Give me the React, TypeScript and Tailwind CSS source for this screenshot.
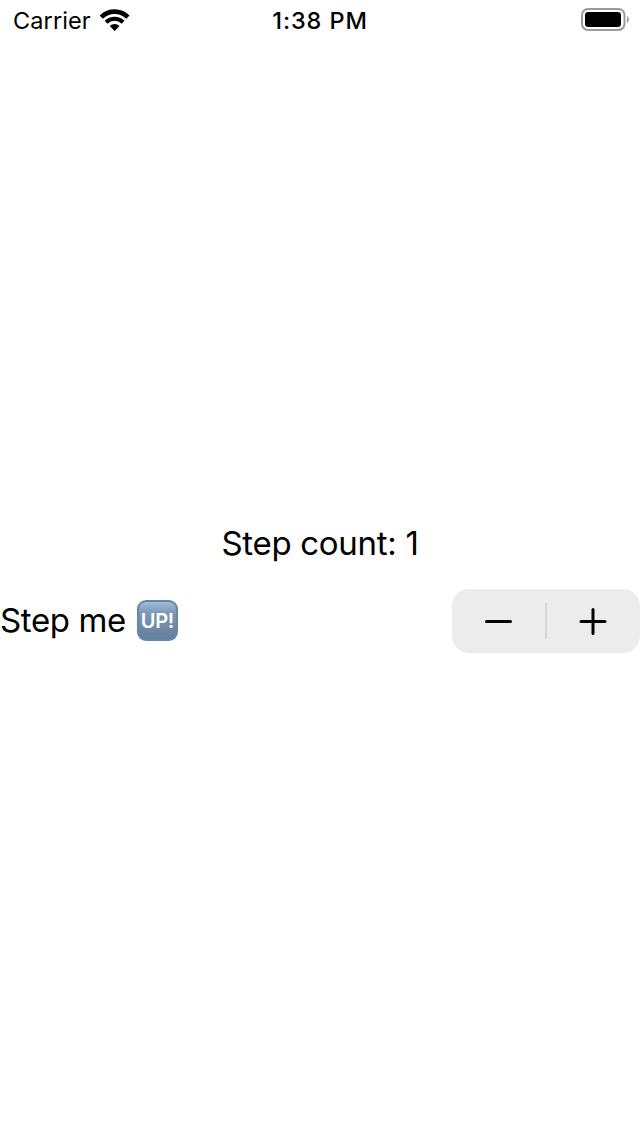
import { useState } from "react";

function WifiIcon() {
  return (
    <svg width="30" height="22" viewBox="0 0 30 22" fill="none" aria-hidden="true">
      <path d="M1.3 8.2A18.8 18.8 0 0 1 27.9 8.2" stroke="#000" strokeWidth="4.7" />
      <path d="M6.1 13.2A12.2 12.2 0 0 1 23.1 13.2" stroke="#000" strokeWidth="4.1" />
      <path d="M14.6 22L9.7 17A7 7 0 0 1 19.5 17Z" fill="#000" />
    </svg>
  );
}

function BatteryIcon() {
  return (
    <svg width="49" height="24" viewBox="0 0 49 24" fill="none" aria-hidden="true">
      <rect x="2" y="1" width="42.5" height="21" rx="6" stroke="#9b9b9b" strokeWidth="2" />
      <rect x="5" y="4" width="36" height="15" rx="3.2" fill="#000" />
      <path d="M47 8C49.4 9 49.4 14 47 15Z" fill="#9b9b9b" />
    </svg>
  );
}

function UpBadge() {
  return (
    <span className="mb-px ml-[11px] flex h-[41px] w-[41px] items-center justify-center rounded-[9px] border-2 border-[#6887a6] border-t-[#6487a8] bg-linear-to-b from-[#9dbad6] via-[#7c98b5] via-30% to-[#637f9c]">
      <span className="text-[20px] leading-none font-semibold tracking-[-0.3px] text-white">UP!</span>
    </span>
  );
}

export default function App() {
  const [count, setCount] = useState(1);

  return (
    <div className="flex h-[1136px] w-[640px] flex-col bg-white font-['Inter',sans-serif] text-black">
      <header className="grid h-10 grid-cols-3 items-center">
        <div className="flex items-center gap-[9px] pl-[13px]">
          <span className="pt-0.5 text-[23.5px] leading-[38px] tracking-[0.1px]">Carrier</span>
          <WifiIcon />
        </div>
        <div className="pt-0.5 text-center text-[23.5px] leading-[38px] font-medium tracking-[0.9px]">1:38 PM</div>
        <div className="flex justify-end pr-[11px]">
          <BatteryIcon />
        </div>
      </header>
      <main className="flex flex-col pt-[483px]">
        <p className="text-center text-[33px] leading-10 tracking-[-0.3px]">Step count: {count}</p>
        <div className="mt-[26px] flex h-16 items-center justify-between">
          <div className="flex items-center">
            <span className="mb-0.5 text-[33px] leading-10 tracking-[-0.38px]">Step me</span>
            <UpBadge />
          </div>
          <div className="flex h-16 w-[188px] items-center rounded-[17px] bg-[#ececec]">
            <button
              type="button"
              aria-label="Decrement"
              className="flex h-full flex-1 items-center justify-center"
              onClick={() => setCount(count - 1)}
            >
              <svg width="28" height="28" viewBox="0 0 28 28" aria-hidden="true">
                <path d="M1.5 14.5H25.5" stroke="#000" strokeWidth="3" strokeLinecap="round" />
              </svg>
            </button>
            <span className="h-9 w-[2px] bg-[#d6d6d6]" />
            <button
              type="button"
              aria-label="Increment"
              className="flex h-full flex-1 items-center justify-center"
              onClick={() => setCount(count + 1)}
            >
              <svg width="28" height="28" viewBox="0 0 28 28" overflow="visible" aria-hidden="true">
                <path d="M1 14.5H25M13 2.5V26.5" stroke="#000" strokeWidth="3" strokeLinecap="round" />
              </svg>
            </button>
          </div>
        </div>
      </main>
    </div>
  );
}
